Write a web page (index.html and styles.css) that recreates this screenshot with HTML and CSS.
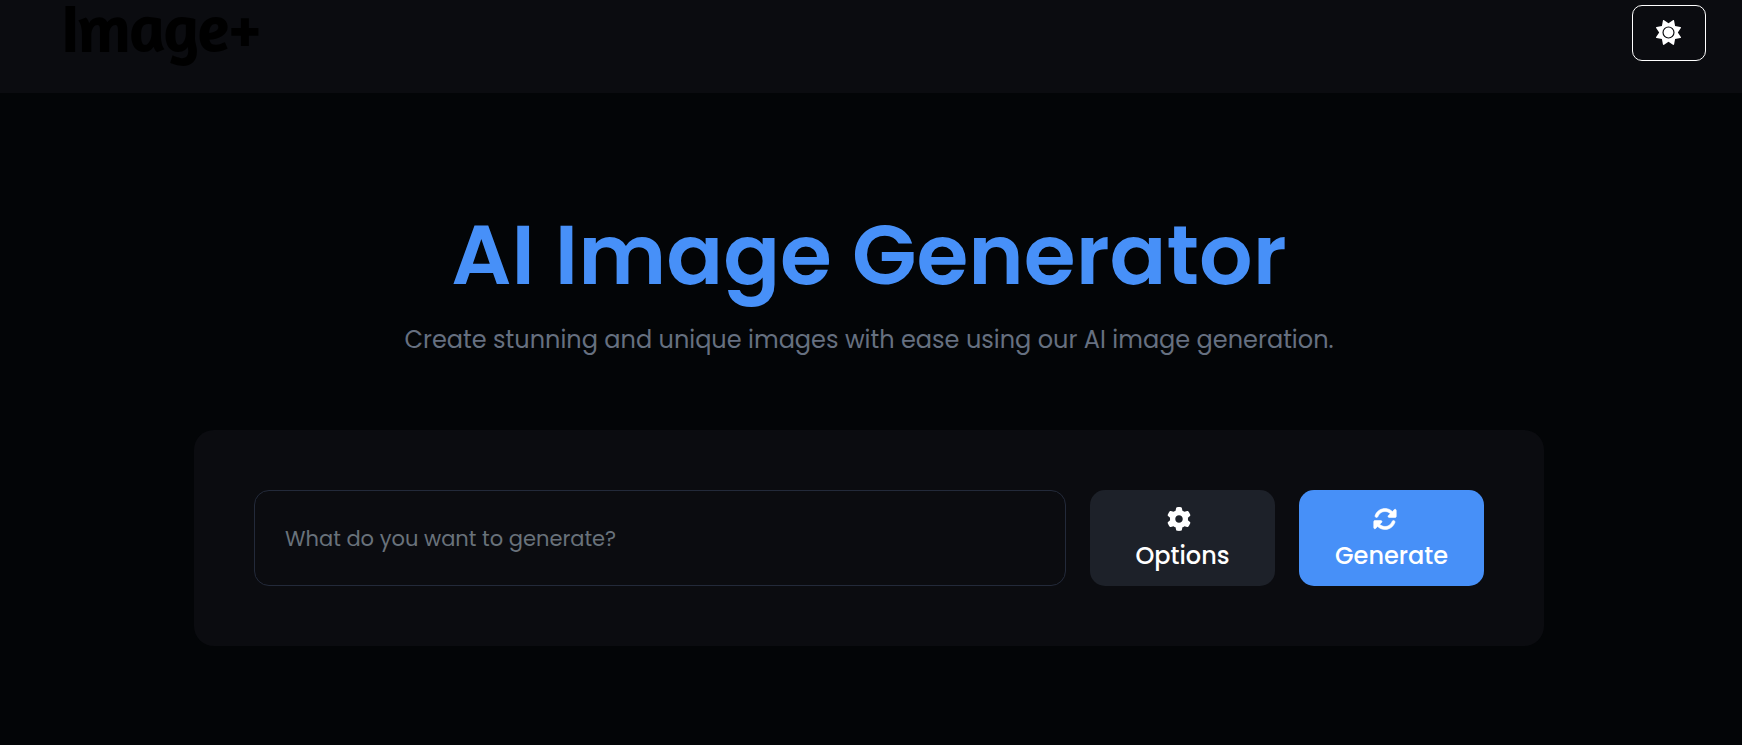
FILE: index.html
```html
<!DOCTYPE html>
<html lang="en">
<head>
<meta charset="utf-8">
<meta name="viewport" content="width=device-width, initial-scale=1">
<title>AI Image Generator</title>
<link rel="stylesheet" href="styles.css">
</head>
<body>
<header class="header">
  <a class="logo" href="#">Image+</a>
  <button class="theme-toggle" type="button" aria-label="Switch theme">
    <svg class="icon" viewBox="0 0 512 512" aria-hidden="true"><path d="M361.5 1.2c5 2.1 8.6 6.6 9.6 11.9L391 121l107.9 19.8c5.3 1 9.8 4.6 11.9 9.6s1.5 10.7-1.6 15.2L446.9 256l62.3 90.3c3.1 4.5 3.7 10.2 1.6 15.2s-6.6 8.6-11.9 9.6L391 391 371.1 498.9c-1 5.3-4.6 9.8-9.6 11.9s-10.7 1.5-15.2-1.6L256 446.9l-90.3 62.3c-4.5 3.1-10.2 3.7-15.2 1.6s-8.6-6.6-9.6-11.9L121 391 13.1 371.1c-5.3-1-9.8-4.6-11.9-9.6s-1.5-10.7 1.6-15.2L65.1 256 2.8 165.7c-3.1-4.5-3.7-10.2-1.6-15.2s6.6-8.6 11.9-9.6L121 121 140.9 13.1c1-5.3 4.6-9.8 9.6-11.9s10.7-1.5 15.2 1.6L256 65.1 346.3 2.8c4.5-3.1 10.2-3.7 15.2-1.6zM156 256a100 100 0 1 1 200 0 100 100 0 1 1 -200 0zm224 0a124 124 0 1 0 -248 0 124 124 0 1 0 248 0z"/></svg>
  </button>
</header>
<main class="main">
  <h1 class="title">AI Image Generator</h1>
  <p class="subtitle">Create stunning and unique images with ease using our AI image generation.</p>
  <form class="card">
    <input class="prompt" type="text" aria-label="Prompt" placeholder="What do you want to generate?">
    <button class="btn btn-options" type="button">
      <svg class="icon" viewBox="0 0 512 512" aria-hidden="true"><path d="M495.9 166.6c3.2 8.7 .5 18.4-6.4 24.6l-43.3 39.4c1.1 8.3 1.7 16.8 1.7 25.4s-.6 17.1-1.7 25.4l43.3 39.4c6.9 6.2 9.6 15.9 6.4 24.6c-4.4 11.9-9.7 23.3-15.8 34.3l-4.7 8.1c-6.6 11-14 21.4-22.1 31.2c-5.9 7.2-15.7 9.6-24.5 6.8l-55.7-17.7c-13.4 10.3-28.2 18.9-44 25.4l-12.5 57.1c-2 9.1-9 16.3-18.2 17.8c-13.8 2.3-28 3.5-42.5 3.5s-28.7-1.2-42.5-3.5c-9.2-1.5-16.2-8.7-18.2-17.8l-12.5-57.1c-15.8-6.5-30.6-15.1-44-25.4L83.1 425.9c-8.8 2.8-18.6 .3-24.5-6.8c-8.1-9.8-15.5-20.2-22.1-31.2l-4.7-8.1c-6.1-11-11.4-22.4-15.8-34.3c-3.2-8.7-.5-18.4 6.4-24.6l43.3-39.4C64.6 273.1 64 264.6 64 256s.6-17.1 1.7-25.4L22.4 191.2c-6.9-6.2-9.6-15.9-6.4-24.6c4.4-11.9 9.7-23.3 15.8-34.3l4.7-8.1c6.6-11 14-21.4 22.1-31.2c5.9-7.2 15.7-9.6 24.5-6.8l55.7 17.7c13.4-10.3 28.2-18.9 44-25.4l12.5-57.1c2-9.1 9-16.3 18.2-17.8C227.3 1.2 241.5 0 256 0s28.7 1.2 42.5 3.5c9.2 1.5 16.2 8.7 18.2 17.8l12.5 57.1c15.8 6.5 30.6 15.1 44 25.4l55.7-17.7c8.8-2.8 18.6-.3 24.5 6.8c8.1 9.8 15.5 20.2 22.1 31.2l4.7 8.1c6.1 11 11.4 22.4 15.8 34.3zM256 336c44.2 0 80-35.8 80-80s-35.8-80-80-80s-80 35.8-80 80s35.8 80 80 80z"/></svg>
      <span>Options</span>
    </button>
    <button class="btn btn-generate" type="submit">
      <svg class="icon icon-rotate" viewBox="0 0 512 512" aria-hidden="true"><path d="M142.9 142.9c62.2-62.2 162.7-62.5 225.3-1L327 183c-6.9 6.9-8.9 17.2-5.2 26.2s12.5 14.8 22.2 14.8H472c13.3 0 24-10.7 24-24V72c0-9.7-5.8-18.5-14.8-22.2s-19.3-1.7-26.2 5.2L413.4 96.6c-87.6-86.5-228.7-86.2-315.8 1C73.2 122 55.6 150.7 44.8 181.4c-5.9 16.7 2.9 34.9 19.5 40.8s34.9-2.9 40.8-19.5c7.7-21.8 20.2-42.3 37.8-59.8zM16 312V440c0 9.7 5.8 18.5 14.8 22.2s19.3 1.7 26.2-5.2l41.6-41.6c87.6 86.5 228.7 86.2 315.8-1c24.4-24.4 42.1-53.1 52.9-83.7c5.9-16.7-2.9-34.9-19.5-40.8s-34.9 2.9-40.8 19.5c-7.7 21.8-20.2 42.3-37.8 59.8c-62.2 62.2-162.7 62.5-225.3 1L185 329c6.9-6.9 8.9-17.2 5.2-26.2s-12.5-14.8-22.2-14.8H40c-13.3 0-24 10.7-24 24z"/></svg>
      <span>Generate</span>
    </button>
  </form>
</main>
</body>
</html>
```
FILE: styles.css
```css
* {
  box-sizing: border-box;
}

body {
  margin: 0;
  background: #030507;
  color: #fff;
  font-family: Poppins, Inter, sans-serif;
}

.header {
  display: flex;
  align-items: flex-start;
  justify-content: space-between;
  padding: 0 36px 27px 62px;
  background: #0b0c10;
}

.logo {
  color: #000;
  font-family: Amaranth, Lato, sans-serif;
  font-size: 64px;
  font-weight: 400;
  line-height: 56px;
  text-decoration: none;
  -webkit-text-stroke: 2px #000;
}

.icon {
  width: 24px;
  height: 24px;
  fill: #fff;
}

.icon-rotate {
  stroke: #fff;
  stroke-width: 12px;
}

.theme-toggle {
  display: flex;
  align-items: center;
  justify-content: center;
  width: 74px;
  height: 56px;
  margin: 5px 0;
  padding: 0 1px 1px 0;
  border: 1px solid #fff;
  border-radius: 10px;
  background: transparent;
}

.theme-toggle .icon {
  width: 25px;
  height: 25px;
}

.main {
  display: flex;
  flex-direction: column;
  align-items: center;
  padding: 112px 20px 40px 16px;
}

.title {
  margin: 0;
  color: #4790f8;
  font-size: 84px;
  font-weight: 600;
  line-height: 100px;
  text-align: center;
}

.subtitle {
  margin: 17px 0 72px;
  color: #667080;
  font-size: 24px;
  line-height: 36px;
  text-align: center;
}

.card {
  display: grid;
  grid-template-columns: 1fr 185px 185px;
  gap: 24px;
  width: 100%;
  max-width: 1350px;
  padding: 60px;
  border-radius: 20px;
  background: #0b0c10;
}

.prompt {
  min-width: 0;
  padding: 0 30px;
  border: 1px solid #232a3a;
  border-radius: 15px;
  background: transparent;
  color: #fff;
  font-family: inherit;
  font-size: 21px;
}

.prompt::placeholder {
  color: #69727b;
  opacity: 1;
}

.btn {
  display: flex;
  flex-direction: column;
  align-items: center;
  gap: 8px;
  padding: 17px 0 13px;
  border: 0;
  border-radius: 15px;
  color: #fff;
  font-family: inherit;
  font-size: 24px;
  font-weight: 500;
  line-height: 34px;
}

.btn-options {
  background: #1d2129;
}

.btn-options .icon {
  margin-right: 7px;
}

.btn-generate {
  background: #4790f8;
}

.btn-generate .icon {
  margin-right: 14px;
}
```
